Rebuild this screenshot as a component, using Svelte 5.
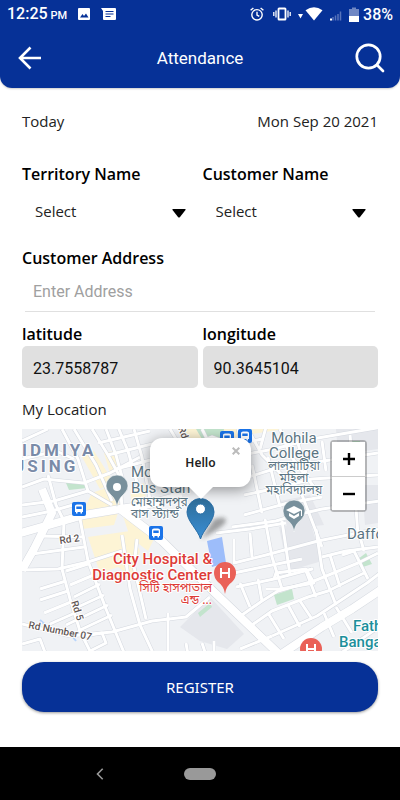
<script>
  let territory = "";
  let customer = "";
  let address = "";
  let latitude = "23.7558787";
  let longitude = "90.3645104";
  let popupOpen = true;

  const majorRoads = [
    "M-5 105L62 86L98 80L124 76L160 66",
    "M98 80L140 112L191 162L258 226",
    "M258 226L300 198L330 180L360 160",
    "M0 141L12 120L30 84L20 60",
  ];

  const roads = [
    "M0 141L36 140L66 133L100 122",
    "M10 125L62 118",
    "M16 107L62 108",
    "M42 92L40 140",
    "M58 90L66 132L84 180L103 226",
    "M40 140L48 170L58 202L70 226",
    "M44 152L18 160", "M46 162L18 171", "M49 173L22 184", "M53 184L28 195",
    "M66 135L44 142", "M74 145L48 156", "M78 155L52 168", "M82 166L56 178", "M86 176L44 196", "M90 186L56 202",
    "M0 195L20 200L48 207L90 203L130 192L164 188L188 168",
    "M62 207L80 204L84 214L68 222",
    "M100 106L108 160L118 196L132 226",
    "M115 110L112 138L124 190",
    "M146 184L146 226",
    "M0 215L18 210L24 226",
    "M0 58L22 50L62 54L88 44L118 28",
    "M0 76L32 72L66 62",
    "M0 88L30 82L58 74",
    "M26 46L34 76L42 92",
    "M52 0L74 36L90 72",
    "M70 0L86 26L98 48L100 80",
    "M40 0L56 30L66 62L90 76",
    "M84 0L94 26L104 62",
    "M96 -2L106 22L118 64",
    "M112 0L120 28L128 70",
    "M76 14L128 2", "M86 26L134 14", "M94 40L140 28",
    "M0 12L26 0", "M0 30L34 22L52 30",
    "M148 0L160 20L190 8L212 16L240 10",
    "M180 0L190 20", "M216 0L224 32",
    "M226 0L240 26L280 66L300 118",
    "M244 -2L238 20",
    "M258 0L268 26L292 58",
    "M220 26L252 20L290 10L360 -2",
    "M220 50L252 40L288 34L356 24",
    "M222 66L260 58L290 50L356 46",
    "M222 86L266 74L300 68",
    "M210 98L254 92L274 86L300 80L358 72",
    "M230 36L240 84", "M246 28L258 78",
    "M276 14L286 52", "M300 12L304 42", "M328 6L332 52L336 106",
    "M194 104L228 100L264 94",
    "M212 110L212 134L244 126L296 112L356 100",
    "M228 104L230 128",
    "M243 90L250 128L260 160L244 160",
    "M260 92L268 146",
    "M294 100L300 140L314 176",
    "M308 126L318 158",
    "M320 126L332 122L346 150",
    "M300 128L324 122L356 118",
    "M338 108L342 122",
    "M212 144L250 136L280 130",
    "M214 158L252 150L290 140L284 142L294 168",
    "M252 150L254 144L284 140L292 154L258 160",
    "M220 186L240 172L256 162L292 152L336 134L356 124",
    "M218 154L228 178",
    "M236 150L240 172",
    "M230 196L250 182L286 168L306 162L342 144",
    "M246 184L262 210",
    "M266 176L278 198",
    "M278 172L290 190",
    "M250 207L295 187L345 154L358 144",
    "M218 220L250 207",
    "M302 184L312 208",
    "M314 178L330 204",
    "M276 212L304 226",
    "M180 214L184 226", "M192 212L192 226", "M164 214L166 226",
    "M316 226L360 196",
  ];

  // bus stops, top-left corner of each badge
  const busStops = [
    { x: 50, y: 73 },
    { x: 127, y: 97 },
    { x: 198, y: 2 },
    { x: 216, y: 0 },
  ];
</script>

<svelte:head>
  <title>Attendance</title>
</svelte:head>

<div class="screen">
  <header class="header">
    <div class="status">
      <div class="status-side">
        <span class="clock">12:25<small>PM</small></span>
        <svg class="status-photo" width="14" height="14" viewBox="0 0 14 14">
          <rect x="1" y="1" width="12" height="12" rx="1" fill="#fff" />
          <path d="M3 10.500L5.500 7L7 9L9 6.500L11.500 10.500Z" fill="#063197" />
        </svg>
        <svg class="status-note" width="16" height="14" viewBox="0 0 16 14">
          <path d="M0 1H14Q15 1 15 2V12Q15 13 14 13H3Q2 13 2 12V4Z" fill="#fff" />
          <path d="M4.500 4.500H12.500M4.500 7H12.500M4.500 9.500H9.500" stroke="#063197" stroke-width="1.100" />
        </svg>
      </div>
      <div class="status-side">
        <svg width="14" height="14" viewBox="0 0 14 14" fill="none" stroke="#fff" stroke-width="1.400">
          <circle cx="7" cy="7.800" r="5.200" />
          <path d="M7 4.800V8L9.300 9.400M.6 3.300L3.400 1M13.400 3.300L10.600 1" />
        </svg>
        <svg class="status-vibrate" width="18" height="14" viewBox="0 0 18 14" fill="none" stroke="#fff" stroke-width="1.800">
          <rect x="5.500" y="1.500" width="7" height="11" rx=".6" />
          <path d="M3 3.500V10.500M.8 5V9M15 3.500V10.500M17.200 5V9" stroke-width="1.300" />
        </svg>
        <svg class="status-wifi" width="25" height="14" viewBox="0 0 25 14" fill="#fff">
          <path d="M0 7H5L2.500 11.500Z" />
          <path d="M7.500 3.200Q16 -2.600 24.500 3.200L16 13.500Z" />
        </svg>
        <svg class="status-signal" width="14" height="14" viewBox="0 0 14 14">
          <path d="M4 13.500V10M6.500 13.500V8.500M9 13.500V7M11.500 13.500V4.500" stroke="#5874bb" stroke-width="1.500" />
          <rect x="1" y="11.500" width="2" height="2" fill="#fff" />
        </svg>
        <svg class="status-battery" width="10" height="15" viewBox="0 0 10 15">
          <path d="M0 2H3V.5H7V2H10V9H0Z" fill="#6f87c4" />
          <path d="M0 9H10V15H0Z" fill="#fff" />
        </svg>
        <span class="percent">38%</span>
      </div>
    </div>
    <div class="toolbar">
      <button class="icon-btn" type="button" aria-label="Back">
        <svg width="24" height="24" viewBox="0 0 24 24" fill="none" stroke="#fff" stroke-width="2.600">
          <path d="M23 12H3M12.500 1.500L2 12L12.500 22.500" />
        </svg>
      </button>
      <h1>Attendance</h1>
      <button class="icon-btn" type="button" aria-label="Search">
        <svg width="30" height="30" viewBox="0 0 30 30" fill="none" stroke="#fff" stroke-width="2.700" stroke-linecap="round">
          <circle cx="13.500" cy="13.500" r="11.700" />
          <path d="M22 22L28 28" />
        </svg>
      </button>
    </div>
  </header>

  <main>
    <div class="date-row">
      <span>Today</span>
      <span>Mon Sep 20 2021</span>
    </div>

    <form on:submit|preventDefault>
      <div class="pair">
        <div class="field">
          <label for="territory">Territory Name</label>
          <div class="select-wrap">
            <select id="territory" bind:value={territory}>
              <option value="">Select</option>
            </select>
            <svg width="14" height="9" viewBox="0 0 14 9"><path d="M1 0H13Q14 0 13.500 1L8 8Q7 9 6 8L.5 1Q0 0 1 0Z" /></svg>
          </div>
        </div>
        <div class="field">
          <label for="customer">Customer Name</label>
          <div class="select-wrap">
            <select id="customer" bind:value={customer}>
              <option value="">Select</option>
            </select>
            <svg width="14" height="9" viewBox="0 0 14 9"><path d="M1 0H13Q14 0 13.500 1L8 8Q7 9 6 8L.5 1Q0 0 1 0Z" /></svg>
          </div>
        </div>
      </div>

      <div class="field">
        <label for="address">Customer Address</label>
        <input id="address" class="line-input" type="text" placeholder="Enter Address" bind:value={address} />
      </div>

      <div class="pair coords">
        <div class="field">
          <label for="latitude">latitude</label>
          <input id="latitude" class="box-input" type="text" readonly bind:value={latitude} />
        </div>
        <div class="field">
          <label for="longitude">longitude</label>
          <input id="longitude" class="box-input" type="text" readonly bind:value={longitude} />
        </div>
      </div>

      <h2>My Location</h2>

      <div class="map">
        <svg class="tiles" viewBox="0 0 356 222" preserveAspectRatio="xMidYMid slice">
          <defs>
            <linearGradient id="pin" x1="0" y1="0" x2="0" y2="1">
              <stop offset="0" stop-color="#2e6c97" />
              <stop offset="1" stop-color="#3a8fd6" />
            </linearGradient>
            <filter id="soft" x="-50%" y="-50%" width="200%" height="200%">
              <feGaussianBlur stdDeviation="2" />
            </filter>
          </defs>
          <rect width="356" height="222" fill="#f0f2f5" />

          <!-- land use -->
          <g fill="#e5e7ec">
            <path d="M188 168L222 205L205 220L178 212L158 198Z" />
            <path d="M257 98L288 92L300 132L266 142Z" />
            <path d="M258 72L288 66L302 96L266 100Z" />
            <path d="M340 56H356V94L343 96Z" />
            <path d="M314 0H356V20L316 26Z" />
          </g>
          <g fill="#fdf4d5">
            <path d="M60 28L72 22L92 54L78 60Z" />
            <path d="M82 24L92 22L98 40L88 44Z" />
            <path d="M70 64L86 58L98 76L60 84Z" />
            <path d="M56 90L96 84L92 96L60 100Z" />
            <path d="M100 84L132 110L126 122L108 108Z" />
            <path d="M66 108L108 102L118 122L110 148L96 138L78 144Z" />
            <path d="M200 10L262 0H200Z" />
            <path d="M108 60L122 54L124 72L110 76Z" />
            <path d="M160 0L180 0L186 8L166 12Z" />
          </g>
          <g fill="#c3e4cd">
            <path d="M44 54L62 52L65 59L47 61Z" />
            <path d="M174 0H202L200 10H180Z" />
            <path d="M336 130L344 124L350 135L338 139Z" />
            <path d="M176 184L188 174L190 178L178 188Z" />
            <path d="M328 12H338V17H328Z" />
          </g>
          <path d="M18 191L28 200M46 202L54 212" stroke="#b8d5fb" stroke-width="2" />

          <!-- streets -->
          <g fill="none" stroke="#d4d8df" stroke-linejoin="round">
            {#each roads as d}<path {d} stroke-width="4" />{/each}
            {#each majorRoads as d}<path {d} stroke-width="9" />{/each}
          </g>
          <g fill="none" stroke="#fff" stroke-linejoin="round">
            {#each roads as d}<path {d} stroke-width="3" />{/each}
            {#each majorRoads as d}<path {d} stroke-width="8" />{/each}
          </g>
          <path d="M252 166L270 160L272 170L255 176Z" fill="#c3e4cd" />
          <path d="M185 112L200 108L204 134L190 138Z" fill="#9dbdfa" />

          {#each busStops as stop}
            <g transform="translate({stop.x} {stop.y})">
              <rect width="14" height="14" rx="2" fill="#1a73e8" />
              <path d="M3 4Q3 2.500 5 2.500H9Q11 2.500 11 4V10H10V11.500H8.500V10H5.500V11.500H4V10H3Z" fill="#fff" />
              <path d="M4.300 4.500H9.700V7H4.300Z" fill="#1a73e8" />
            </g>
          {/each}

          <!-- places -->
          <g class="area">
            <text x="0" y="27">IDMIYA</text>
            <text x="-9" y="43">USING</text>
          </g>
          <g class="street">
            <text transform="translate(38 115) rotate(-8)">Rd 2</text>
            <text transform="translate(49 173) rotate(72)">Rd 5</text>
            <text transform="translate(6 199) rotate(11)">Rd Number 07</text>
            <text transform="translate(156 -1) rotate(70)">Rd</text>
          </g>
          <g class="place">
            <text x="109" y="48">Mo</text>
            <text x="109" y="64">Bus Stan</text>
            <text class="bn" x="109" y="77">মোহাম্মদপুর</text>
            <text class="bn" x="109" y="89">বাস স্ট্যান্ড</text>
            <g text-anchor="middle">
              <text x="272" y="14">Mohila</text>
              <text x="272" y="29">College</text>
              <text class="bn" x="272" y="41">লালমাটিয়া</text>
              <text class="bn" x="272" y="53">মহিলা</text>
              <text class="bn" x="272" y="65">মহাবিদ্যালয়</text>
            </g>
            <text x="325" y="110">Daffodil</text>
          </g>
          <g class="hospital" text-anchor="end">
            <text x="190" y="135">City Hospital &amp;</text>
            <text x="190" y="151">Diagnostic Center</text>
            <text class="bn" x="190" y="163">সিটি হাসপাতাল</text>
            <text class="bn" x="190" y="175">এন্ড ...</text>
          </g>
          <g class="mosque">
            <text x="331" y="202">Fatha</text>
            <text x="317" y="218">Bangal</text>
          </g>

          <!-- place pins -->
          <g fill="#78909c" stroke="#fff" stroke-opacity=".6">
            <path d="M95 78Q94 70 88 65Q84 61 84 57A11 11 0 0 1 106 57Q106 61 102 65Q96 70 95 78Z" />
            <path d="M272 103Q271 95 265 91Q261 87 261 82A11 11 0 0 1 283 82Q283 87 279 91Q273 95 272 103Z" />
          </g>
          <circle cx="95" cy="58" r="4" fill="#fff" />
          <path d="M264 81L272 77L280 81L272 85ZM267 84L272 87L277 84V87L272 90L267 87ZM279 81H280V87H279Z" fill="#fff" />
          <g fill="#ea6158">
            <path d="M203 165Q202 157 196 153Q192 149 192 144A11 11 0 0 1 214 144Q214 149 210 153Q204 157 203 165Z" />
            <circle cx="289" cy="220" r="11" />
          </g>
          <path d="M199 139V149M207 139V149M199 144H207M285 215V225M293 215V225M285 220H293" stroke="#fff" stroke-width="2" />

          <!-- current position -->
          <path d="M179 110L192 90Q204 86 204 92Q202 98 179 110Z" fill="#222" opacity=".4" filter="url(#soft)" />
          <path d="M178.500 110C176 101 165 92 165 83A13.500 13.500 0 0 1 192 83C192 92 181 101 178.500 110Z" fill="url(#pin)" stroke="#2a6ea6" />
          <circle cx="178.500" cy="80" r="5" fill="#fff" stroke="#2a6ea6" />
        </svg>

        {#if popupOpen}
          <div class="popup">
            Hello
            <button class="popup-close" type="button" aria-label="Close popup" on:click={() => popupOpen = false}>
              <svg width="8" height="8" viewBox="0 0 8 8"><path d="M.7 .7L7.300 7.300M7.300 .7L.7 7.300" stroke="#bbb" stroke-width="2" /></svg>
            </button>
          </div>
        {/if}

        <div class="zoom">
          <button type="button" aria-label="Zoom in">
            <svg width="12" height="12" viewBox="0 0 12 12"><path d="M0 6H12M6 0V12" stroke="#000" stroke-width="2.400" /></svg>
          </button>
          <button type="button" aria-label="Zoom out">
            <svg width="12" height="12" viewBox="0 0 12 12"><path d="M0 6H12" stroke="#000" stroke-width="2.400" /></svg>
          </button>
        </div>
      </div>

      <button class="register" type="submit">REGISTER</button>
    </form>
  </main>

  <nav class="navbar">
    <button type="button" aria-label="Previous">
      <svg width="8" height="12" viewBox="0 0 8 12" fill="none" stroke="#999" stroke-width="1.600"><path d="M6.700 .8L1.500 6L6.700 11.200" /></svg>
    </button>
    <button type="button" aria-label="Home"><span class="pill"></span></button>
    <span></span>
  </nav>
</div>

<style>
  :global(body) { margin: 0; background: #fff; }
  .screen { display: flex; flex-direction: column; min-height: 100vh; background: #fff; color: #222; font-family: "Open Sans", "Noto Sans", sans-serif; }
  button { font: inherit; padding: 0; border: none; background: none; cursor: pointer; }
  svg { display: block; flex: none; }

  .header { background: #063197; color: #fff; border-radius: 0 0 12px 12px; font-family: Roboto, sans-serif; box-shadow: 0 1px 2px rgba(0, 0, 0, 0.2); }
  .status { display: flex; justify-content: space-between; align-items: center; height: 28px; padding: 0 7px; }
  .status-side { display: flex; align-items: center; }
  .clock, .percent { font-size: 16px; font-weight: 500; line-height: 18px; padding-top: 2px; }
  .clock small { margin-left: 3px; font-size: 11px; }
  .status-photo { margin-left: 10px; }
  .status-note { margin-left: 10px; }
  .status-vibrate { margin-left: 9px; }
  .status-wifi { margin-left: 7px; }
  .status-signal { margin-left: 6px; }
  .status-battery { margin: 0 4px 0 6px; }
  .toolbar { display: flex; align-items: center; justify-content: space-between; height: 60px; padding: 0 15px; }
  .icon-btn { display: flex; justify-content: center; width: 30px; }
  h1 { margin: 0; font-size: 17px; font-weight: 400; }

  main { flex: 1; padding: 22px; }
  .date-row { display: flex; justify-content: space-between; font-size: 15px; line-height: 22px; }
  form { display: flex; flex-direction: column; }
  .pair { display: grid; grid-template-columns: 1fr 1fr; gap: 5px; }
  .pair:first-child { margin-top: 30px; }
  .field { display: flex; flex-direction: column; min-width: 0; }
  label { font-size: 16px; font-weight: 600; line-height: 24px; color: #000; }
  .select-wrap { display: grid; align-items: center; margin-bottom: 10px; }
  .select-wrap > * { grid-area: 1 / 1; }
  .select-wrap svg { justify-self: end; margin: 4px 12px 0 0; pointer-events: none; }
  select { appearance: none; height: 50px; padding: 0 32px 0 13px; border: none; background: none; color: #222; font: 15px "Open Sans", sans-serif; }
  input { box-sizing: border-box; width: 100%; color: #111; font: 16px Roboto, sans-serif; }
  .line-input { height: 42px; padding: 2px 8px 0; margin: 0 3px; width: auto; border: none; border-bottom: 1px solid #e0e0e0; background: none; }
  .line-input::placeholder { color: #a0a0a0; }
  .coords { margin-top: 10px; }
  .box-input { height: 42px; padding: 2px 11px 0; border: none; border-radius: 5px; background: #e0e0e0; }
  h2 { margin: 10px 0 9px; font-size: 15px; font-weight: 400; line-height: 22px; }

  .map { position: relative; height: 222px; overflow: hidden; }
  .tiles { width: 100%; height: 100%; font-family: Roboto, sans-serif; }
  .tiles text { paint-order: stroke; stroke: #fff; stroke-width: 2px; stroke-linejoin: round; }
  .area { font-size: 17px; font-weight: 700; fill: #7a8ba8; letter-spacing: 3px; }
  .street { font-size: 10px; font-weight: 500; fill: #5f5654; }
  .place { font-size: 15px; fill: #5b7583; }
  .hospital { font-size: 15px; font-weight: 500; fill: #dd3b37; }
  .mosque { font-size: 15px; font-weight: 500; fill: #1c8f9b; }
  .tiles .bn { font-size: 12px; font-weight: 400; font-family: "Noto Sans Bengali", "Noto Sans", sans-serif; }

  .popup { position: absolute; top: 9px; left: 50%; width: 101px; height: 49px; margin-left: -50px; border-radius: 12px; background: #fff; box-shadow: 0 3px 14px rgba(0, 0, 0, 0.4); text-align: center; font-family: "Noto Sans", sans-serif; font-size: 12px; font-weight: 600; line-height: 49px; }
  .popup::after { content: ""; position: absolute; top: 48px; left: 50%; margin-left: -13px; border: 13px solid transparent; border-top-color: #fff; border-bottom: none; }
  .popup-close { position: absolute; top: 9px; right: 11px; }
  .zoom { position: absolute; top: 11px; right: 11px; border: 2px solid rgba(0, 0, 0, 0.25); border-radius: 4px; background-clip: padding-box; }
  .zoom button { display: flex; align-items: center; justify-content: center; width: 33px; height: 34px; background: #fff; }
  .zoom button + button { border-top: 1px solid #ccc; }

  .register { height: 50px; margin-top: 11px; border-radius: 22px; background: #063197; color: #fff; font-family: "Noto Sans", sans-serif; font-size: 15px; box-shadow: 0 1px 3px rgba(0, 0, 0, 0.4); }

  .navbar { display: grid; grid-template-columns: 1fr 1fr 1fr; align-items: center; height: 53px; padding: 0 50px; background: #000; }
  .navbar button { display: flex; justify-content: center; }
  .pill { width: 32px; height: 12px; border-radius: 6px; background: #999; }
</style>
